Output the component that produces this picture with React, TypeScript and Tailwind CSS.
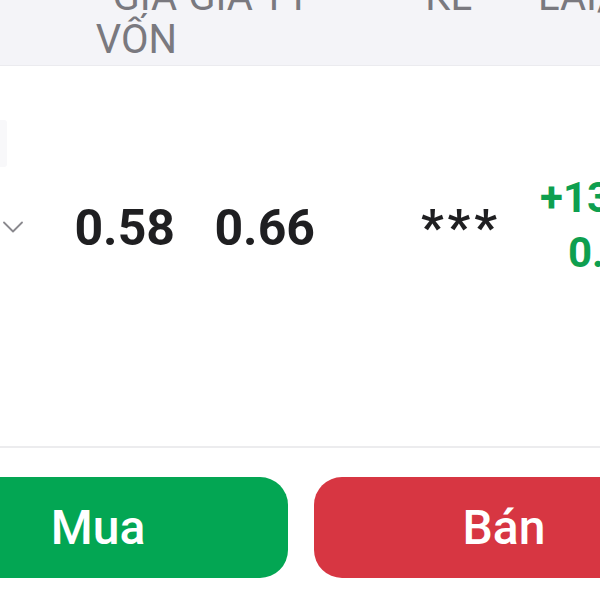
export default function App() {
  return (
    <div
      className="w-[600px] h-[600px] overflow-hidden bg-white flex flex-col"
      style={{ fontFamily: "Roboto, 'Liberation Sans', sans-serif" }}
    >
      {/* header */}
      <div className="h-[66px] shrink-0 overflow-hidden bg-[#f4f4f8] border-b border-[#ebebef]">
        <div className="-mt-[25px] flex items-start text-[40px] leading-[43px] text-[#7a797f] whitespace-nowrap">
          <div className="w-[23px] shrink-0" />
          <div className="w-[154px] shrink-0 text-right">
            GIÁ
            <br />
            VỐN
          </div>
          <div className="w-[140px] shrink-0 text-right pr-[7px]">GIÁ TT</div>
          <div className="w-[180px] shrink-0 text-right pr-[25px]">KL</div>
          <div className="ml-[41px]">LÃI/LỖ</div>
        </div>
      </div>

      {/* position row */}
      <div className="h-[380px] shrink-0 flex flex-col">
        <div className="w-[7px] h-[47px] mt-[54px] bg-[#f8f8fa] rounded-r-[3px]" />
        <div className="flex items-start whitespace-nowrap">
          <div className="w-[23px] shrink-0 pl-[3px] mt-[54px]">
            <svg width="20" height="12" viewBox="0 0 20 12" fill="none">
              <path d="M1 1.5L10 10.5L19 1.5" stroke="#8a898e" strokeWidth="1.8" strokeLinecap="round" strokeLinejoin="round" />
            </svg>
          </div>
          <div className="w-[152px] shrink-0 text-right mt-[36px] text-[50px] leading-[50px] font-bold text-[#1f1f21]">
            0.58
          </div>
          <div className="w-[140px] shrink-0 text-right mt-[36px] text-[50px] leading-[50px] font-bold text-[#1f1f21]">
            0.66
          </div>
          <div className="w-[186px] shrink-0 text-right mt-[36px] text-[50px] leading-[50px] font-bold text-[#1f1f21] tracking-[4px]">
            ***
          </div>
          <div className="ml-[39px] mt-[3px] text-[42px] leading-[55px] font-bold text-[#0e9f4f]">
            <div>+13.620</div>
            <div className="pl-[28px]">0.62%</div>
          </div>
        </div>
      </div>

      {/* divider */}
      <div className="h-[2px] shrink-0 bg-[#ececee]" />

      {/* actions */}
      <div className="pt-[29px] shrink-0">
        <div className="-ml-[92px] w-[786px] flex gap-[26px]">
          <button className="w-[380px] h-[101px] rounded-[28px] bg-[#03a653] text-white text-[48px] font-medium flex items-center justify-center">
            Mua
          </button>
          <button className="w-[380px] h-[101px] rounded-[28px] bg-[#d73642] text-white text-[48px] font-medium flex items-center justify-center">
            Bán
          </button>
        </div>
      </div>
    </div>
  )
}
